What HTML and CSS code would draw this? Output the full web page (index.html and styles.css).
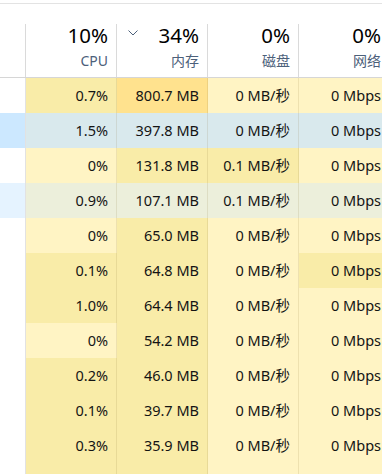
FILE: index.html
```html
<!DOCTYPE html>
<html lang="zh-CN">
<head>
<meta charset="utf-8">
<title>任务管理器</title>
<link rel="stylesheet" href="styles.css">
</head>
<body>
<div class="topline"></div>
<div class="table">
  <div class="head">
    <div class="hcell name"></div>
    <div class="hcell"><div class="big">10%</div><div class="sub">CPU</div></div>
    <div class="hcell"><div class="bigrow"><svg class="chev" width="10" height="6" viewBox="0 0 10 6"><path d="M0.5 0.5 L5 5 L9.5 0.5" fill="none" stroke="#4c607a" stroke-width="1"/></svg><div class="big">34%</div></div><div class="sub">内存</div></div>
    <div class="hcell"><div class="big">0%</div><div class="sub">磁盘</div></div>
    <div class="hcell"><div class="big">0%</div><div class="sub">网络</div></div>
  </div>
  <div class="row"><div class="cell name"></div><div class="cell h1">0.7%</div><div class="cell h2">800.7 MB</div><div class="cell h0">0 MB/秒</div><div class="cell h0">0 Mbps</div></div>
  <div class="row sel"><div class="cell name"></div><div class="cell h1">1.5%</div><div class="cell h1">397.8 MB</div><div class="cell h0">0 MB/秒</div><div class="cell h0">0 Mbps</div></div>
  <div class="row"><div class="cell name"></div><div class="cell h0">0%</div><div class="cell h1">131.8 MB</div><div class="cell h1">0.1 MB/秒</div><div class="cell h0">0 Mbps</div></div>
  <div class="row hov"><div class="cell name"></div><div class="cell h1">0.9%</div><div class="cell h1">107.1 MB</div><div class="cell h1">0.1 MB/秒</div><div class="cell h0">0 Mbps</div></div>
  <div class="row"><div class="cell name"></div><div class="cell h0">0%</div><div class="cell h1">65.0 MB</div><div class="cell h0">0 MB/秒</div><div class="cell h0">0 Mbps</div></div>
  <div class="row"><div class="cell name"></div><div class="cell h1">0.1%</div><div class="cell h1">64.8 MB</div><div class="cell h0">0 MB/秒</div><div class="cell h1">0 Mbps</div></div>
  <div class="row"><div class="cell name"></div><div class="cell h1">1.0%</div><div class="cell h1">64.4 MB</div><div class="cell h0">0 MB/秒</div><div class="cell h0">0 Mbps</div></div>
  <div class="row"><div class="cell name"></div><div class="cell h0">0%</div><div class="cell h1">54.2 MB</div><div class="cell h0">0 MB/秒</div><div class="cell h0">0 Mbps</div></div>
  <div class="row"><div class="cell name"></div><div class="cell h1">0.2%</div><div class="cell h1">46.0 MB</div><div class="cell h0">0 MB/秒</div><div class="cell h0">0 Mbps</div></div>
  <div class="row"><div class="cell name"></div><div class="cell h1">0.1%</div><div class="cell h1">39.7 MB</div><div class="cell h0">0 MB/秒</div><div class="cell h0">0 Mbps</div></div>
  <div class="row"><div class="cell name"></div><div class="cell h1">0.3%</div><div class="cell h1">35.9 MB</div><div class="cell h0">0 MB/秒</div><div class="cell h0">0 Mbps</div></div>
  <div class="row last"><div class="cell name"></div><div class="cell h1"></div><div class="cell h1"></div><div class="cell h0"></div><div class="cell h0"></div></div>
</div>
</body>
</html>
```

FILE: styles.css
```css
html, body {
  margin: 0;
  padding: 0;
  background: #ffffff;
  overflow: hidden;
}
body {
  width: 382px;
  height: 474px;
  font-family: "Noto Sans", "Noto Sans CJK SC", sans-serif;
  color: #141414;
}
.topline {
  height: 3px;
  border-bottom: 1px solid #e3e3e3;
}
.table {
  width: 390px;
}
.head {
  display: grid;
  grid-template-columns: 26px 91px 91px 91px 91px;
  padding-top: 20px;
  border-bottom: 1px solid #d6d6d6;
}
.hcell {
  height: 53px;
  border-right: 1px solid #dadada;
  box-sizing: border-box;
  display: flex;
  flex-direction: column;
  align-items: flex-end;
  padding-right: 8px;
}
.bigrow {
  align-self: stretch;
  display: flex;
  justify-content: space-between;
  align-items: flex-start;
  padding-left: 11px;
}
.chev {
  margin-top: 6px;
  display: block;
}
.big {
  font-size: 20.5px;
  line-height: 20px;
  color: #000000;
  margin-top: 1px;
}
.sub {
  font-size: 14px;
  line-height: 16px;
  margin-top: 8px;
  color: #4c607a;
}
.row {
  display: grid;
  grid-template-columns: 26px 91px 91px 91px 91px;
  height: 35px;
}
.row.last {
  height: 11px;
}
.cell {
  box-sizing: border-box;
  border-right: 1px solid rgba(120, 100, 40, 0.13);
  font-size: 14.5px;
  line-height: 35px;
  text-align: right;
  padding-right: 8px;
  white-space: nowrap;
}
.cell.name {
  background: #ffffff;
  border-right-color: #e2e2e2;
}
.h0 { background: #fff4c4; }
.h1 { background: #f9eca8; }
.h2 { background: #ffe28e; }
.sel .cell { background: #d9e9ed; }
.sel .cell.name { background: #cce8ff; }
.hov .cell { background: #ecefdb; }
.hov .cell.name { background: #e5f3ff; }
```
